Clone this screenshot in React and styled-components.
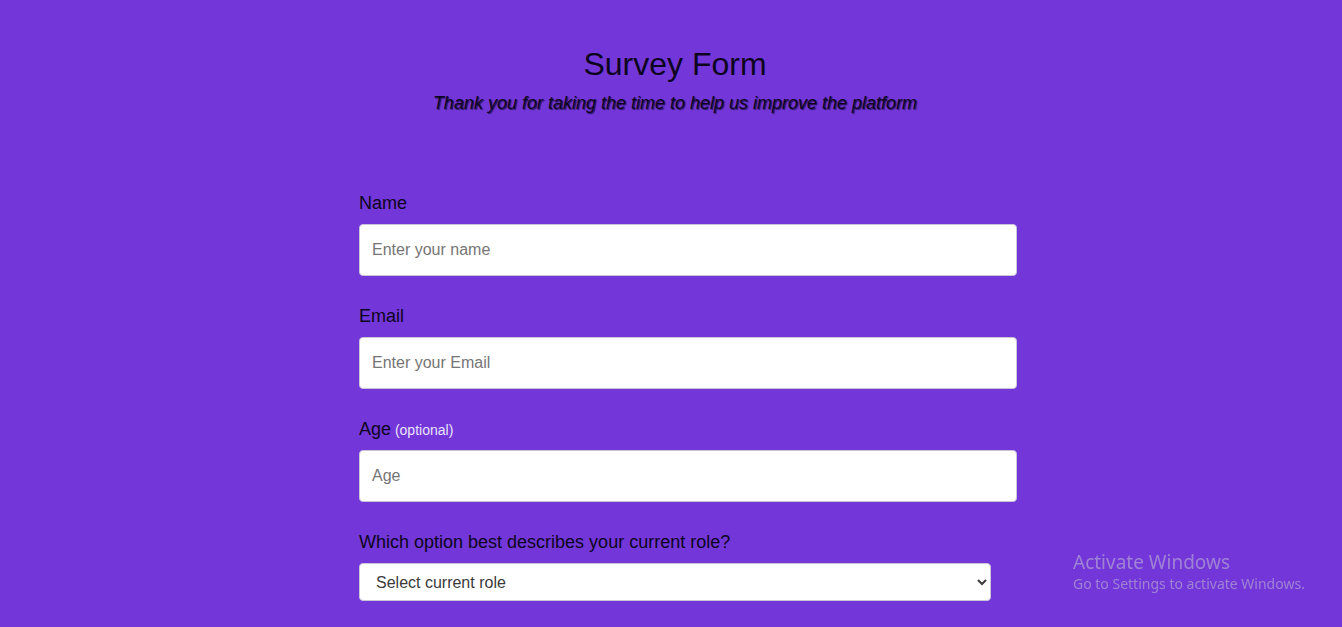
import React from 'react'
import styled, { createGlobalStyle } from 'styled-components'

const GlobalStyle = createGlobalStyle`
  * {
    box-sizing: border-box;
  }

  body {
    margin: 0;
    background-color: #7337d9;
    font-family: "Liberation Sans", Arial, sans-serif;
    color: #0d0520;
  }
`

const Page = styled.main`
  min-height: 627px;
  overflow: hidden;
`

const Header = styled.header`
  display: flex;
  flex-direction: column;
  align-items: center;
  padding: 46px 0 0 8px;
`

const Title = styled.h1`
  margin: 0;
  font-size: 32px;
  font-weight: 400;
  line-height: 37px;
`

const Description = styled.p`
  margin: 10px 0 0;
  font-size: 18px;
  font-style: italic;
  line-height: 21px;
  text-shadow: 1px 1px 1px #2a1060;
`

const Form = styled.form`
  width: 658px;
  margin: 0 auto;
  padding-top: 79px;
  transform: translateX(17px);
  display: flex;
  flex-direction: column;
  gap: 30px;
`

const Group = styled.div`
  display: flex;
  flex-direction: column;
  gap: 10px;
`

const Label = styled.label`
  height: 21px;
  font-size: 18px;
  line-height: 21px;
`

const Hint = styled.span`
  font-size: 14px;
  line-height: 1;
  color: #ece4fb;
`

const Input = styled.input`
  width: 100%;
  height: 52px;
  padding: 0 12px;
  border: 1px solid #c9c4d6;
  border-radius: 4px;
  background: #fff;
  font-family: inherit;
  font-size: 16px;
  color: #333;

  &::placeholder {
    color: #757575;
  }
`

const Select = styled.select`
  width: 632px;
  height: 38px;
  padding: 0 12px;
  border: 1px solid #c9c4d6;
  border-radius: 4px;
  background: #fff;
  font-family: inherit;
  font-size: 16px;
  color: #3a3a3a;
`

const Watermark = styled.div`
  position: fixed;
  left: 1073px;
  top: 550px;
  font-family: "Noto Sans", "Open Sans", sans-serif;
  color: rgba(190, 180, 210, 0.6);
  pointer-events: none;
`

const WatermarkTitle = styled.div`
  font-size: 19px;
  line-height: 24px;
`

const WatermarkText = styled.div`
  font-size: 14px;
  line-height: 20px;
`

const fields = [
  { id: 'name', label: 'Name', type: 'text', placeholder: 'Enter your name' },
  { id: 'email', label: 'Email', type: 'email', placeholder: 'Enter your Email' },
  { id: 'number', label: 'Age', hint: '(optional)', type: 'number', placeholder: 'Age' }
]

const App = () => (
  <Page>
    <GlobalStyle />
    <Header>
      <Title id="title">Survey Form</Title>
      <Description id="description">
        Thank you for taking the time to help us improve the platform
      </Description>
    </Header>
    <Form id="survey-form">
      {fields.map((field) => (
        <Group key={field.id}>
          <Label htmlFor={field.id}>
            {field.label}
            {field.hint && <Hint> {field.hint}</Hint>}
          </Label>
          <Input id={field.id} type={field.type} placeholder={field.placeholder} />
        </Group>
      ))}
      <Group>
        <Label htmlFor="dropdown">Which option best describes your current role?</Label>
        <Select id="dropdown" defaultValue="">
          <option value="" disabled>
            Select current role
          </option>
          <option value="student">Student</option>
          <option value="job">Full Time Job</option>
          <option value="learner">Full Time Learner</option>
          <option value="other">Other</option>
        </Select>
      </Group>
    </Form>
    <Watermark>
      <WatermarkTitle>Activate Windows</WatermarkTitle>
      <WatermarkText>Go to Settings to activate Windows.</WatermarkText>
    </Watermark>
  </Page>
)

export default App
